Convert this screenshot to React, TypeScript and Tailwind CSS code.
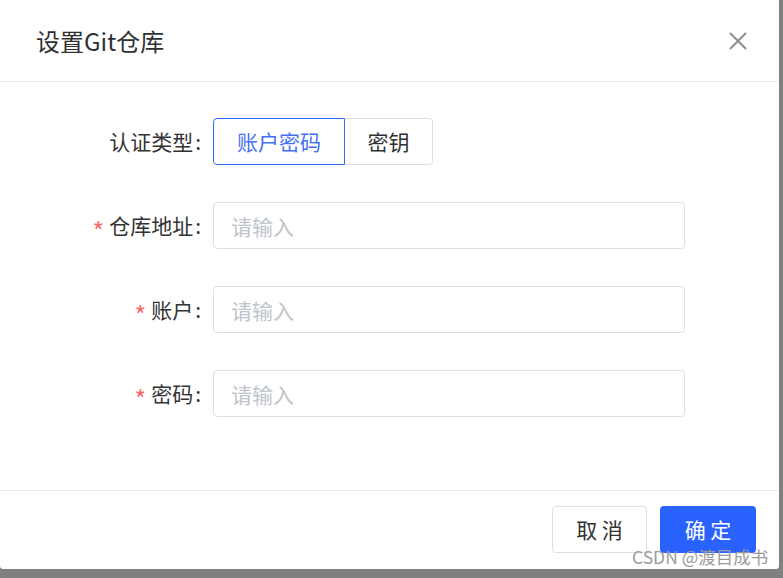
export default function App() {
  const font = { fontFamily: '"Noto Sans CJK SC", "Noto Sans", sans-serif' };
  const fields = ["仓库地址", "账户", "密码"];

  return (
    <div
      className="relative w-[783px] h-[578px] bg-[#808080] overflow-hidden"
      style={font}
    >
      {/* Dialog */}
      <div className="w-[779px] h-[569px] bg-white rounded-b-[3px] flex flex-col">
        {/* Header */}
        <div className="h-[82px] border-b border-[#ebebeb] flex items-center justify-between pl-[36px] pr-[32px]">
          <h1 className="text-[24px] leading-[32px] text-[#303133]">设置Git仓库</h1>
          <svg width="18" height="18" viewBox="0 0 18 18" className="block">
            <path d="M1 1L17 17M17 1L1 17" stroke="#8e8e8e" strokeWidth="2" />
          </svg>
        </div>

        {/* Body */}
        <div className="flex-1 pt-[36px] flex flex-col gap-[37px]">
          <div className="flex items-center">
            <label className="w-[213px] pr-[12px] text-[21px] text-[#333] flex items-center justify-end">
              认证类型<span className="ml-[2px]">:</span>
            </label>
            <div className="flex h-[47px]">
              <button className="w-[132px] h-full border border-[#2f6bff] rounded-l-[4px] text-[21px] text-[#4470f5]">
                账户密码
              </button>
              <button className="w-[88px] h-full border border-l-0 border-[#dcdfe6] rounded-r-[4px] text-[21px] text-[#303133]">
                密钥
              </button>
            </div>
          </div>

          {fields.map((f) => (
            <div key={f} className="flex items-center">
              <label className="w-[213px] pr-[12px] text-[21px] text-[#333] flex items-center justify-end">
                <span className="text-[#f56c6c] mr-[5px] text-[25px] leading-none translate-y-[5px]">*</span>
                {f}
                <span className="ml-[2px]">:</span>
              </label>
              <input
                placeholder="请输入"
                className="w-[472px] h-[47px] border border-[#dcdfe6] rounded-[4px] pl-[17px] text-[21px] outline-none placeholder:text-[#c0c4cc]"
              />
            </div>
          ))}
        </div>

        {/* Footer */}
        <div className="border-t border-[#ebebeb] pt-[15px] pb-[16px] pr-[23px] flex justify-end gap-[13px]">
          <button className="w-[95px] h-[47px] border border-[#dcdfe6] rounded-[4px] text-[21px] text-[#303133]">
            取 消
          </button>
          <button className="w-[96px] h-[47px] bg-[#2962ff] rounded-[4px] text-[21px] text-white">
            确 定
          </button>
        </div>
      </div>

      {/* Watermark */}
      <div className="absolute left-[632px] top-[545px] text-[17.5px] leading-[24px] text-[#9b9b9b] whitespace-nowrap">
        CSDN @渡目成书
      </div>
    </div>
  );
}
